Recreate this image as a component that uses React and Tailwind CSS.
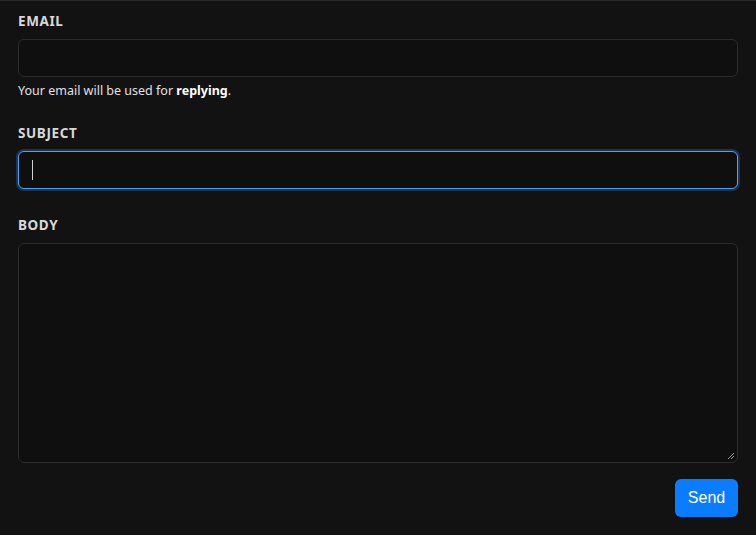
export default function App() {
  const label = "block text-[13.5px] font-bold uppercase tracking-[0.045em] text-[#d8d8d8] leading-[20px] mb-[8px]";
  const input = "block w-full h-[38px] rounded-[6px] border border-[#2c2c2c] bg-[#0f0f0f] outline-none";
  return (
    <div className="min-h-[535px] w-full bg-[#121212] border-t border-[#2a2a2a] px-[18px] pt-[10px] pb-[18px]" style={{ fontFamily: '"Noto Sans", "Open Sans", sans-serif' }}>
      <div>
        <label className={label}>Email</label>
        <div className={input}></div>
        <p className="mt-[5px] text-[12.5px] leading-[18px] text-[#e0e0e0]">
          Your email will be used for <span className="font-bold text-white">replying</span>.
        </p>
      </div>
      <div className="mt-[23px]">
        <label className={label}>Subject</label>
        <div className="block w-full h-[38px] rounded-[6px] border border-[#5a9ee8] bg-[#0f0f0f] shadow-[0_0_0_2px_#173558] flex items-center pl-[13px]">
          <span className="block w-px h-[20px] bg-[#d0d0d0]"></span>
        </div>
      </div>
      <div className="mt-[26px]">
        <label className={label}>Body</label>
        <div className="relative w-full h-[220px] rounded-[6px] border border-[#2c2c2c] bg-[#0f0f0f]">
          <svg className="absolute right-[2px] bottom-[2px]" width="8" height="8" viewBox="0 0 8 8">
            <line x1="1" y1="7" x2="7" y2="1" stroke="#9a9a9a" strokeWidth="1" />
            <line x1="4" y1="7" x2="7" y2="4" stroke="#9a9a9a" strokeWidth="1" />
          </svg>
        </div>
      </div>
      <div className="flex justify-end mt-[16px]">
        <button className="h-[38px] w-[63px] rounded-[6px] bg-[#0a7cff] text-white text-[16px]" style={{ fontFamily: '"Liberation Sans", Arial, sans-serif' }}>Send</button>
      </div>
    </div>
  );
}
